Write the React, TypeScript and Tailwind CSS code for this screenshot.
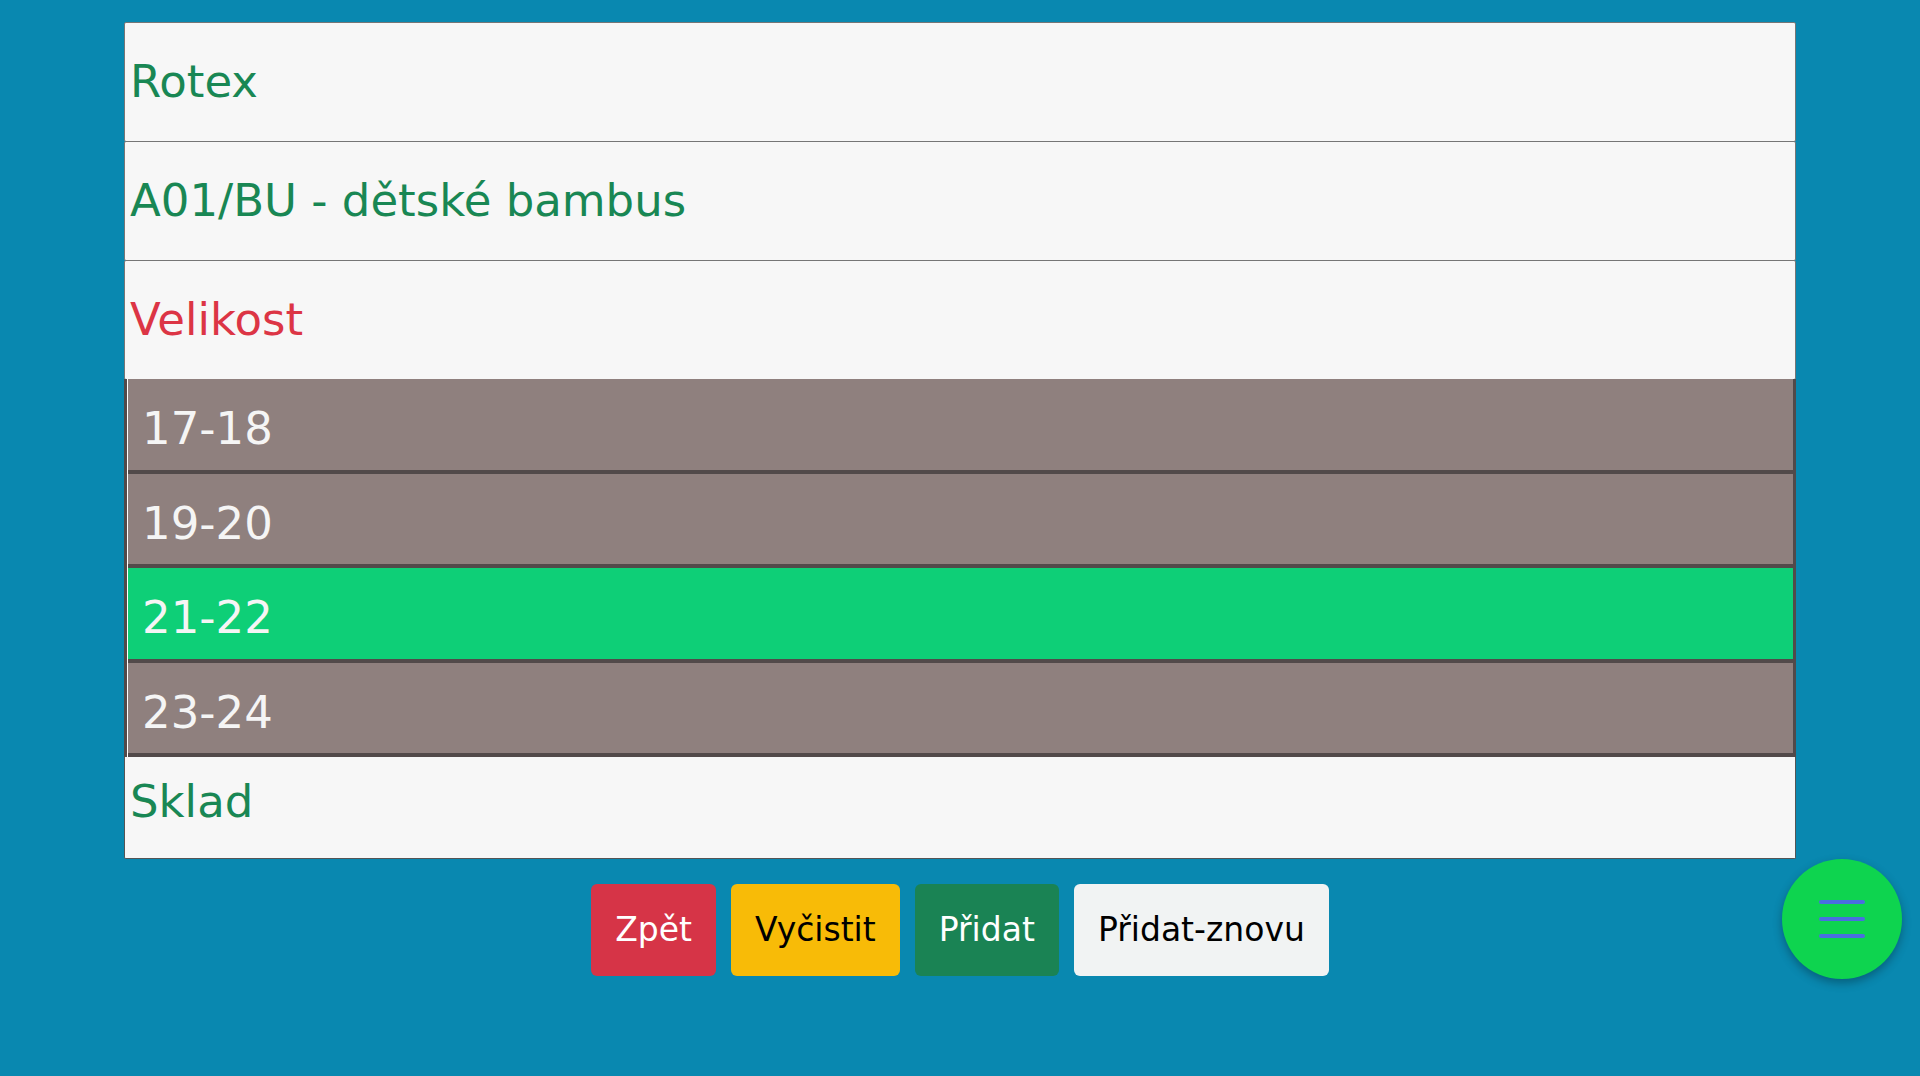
import React, { useState } from "react";

const sizes = ["17-18", "19-20", "21-22", "23-24"];

const Field: React.FC<{ text: string; color: string; first?: boolean }> = ({ text, color, first }) => (
  <div
    className={`h-[120px] flex items-center pl-[5px] bg-[#f7f7f7] border border-[#767676] rounded-[2px] text-[45px] ${color} ${first ? "" : "-mt-px"}`}
  >
    {text}
  </div>
);

const App: React.FC = () => {
  const [selected, setSelected] = useState("21-22");

  return (
    <div
      className="min-h-screen w-full bg-[#0988b0] pt-[22px]"
      style={{ fontFamily: '"DejaVu Sans", "Liberation Sans", sans-serif' }}
    >
      <div className="w-[1672px] mx-auto flex flex-col">
        <Field text="Rotex" color="text-[#198754]" first />
        <Field text="A01/BU - dětské bambus" color="text-[#198754]" />
        <Field text="Velikost" color="text-[#dc3545]" />

        {/* seznam velikostí */}
        <div className="-mt-px flex border-l-[3px] border-r-[3px] border-[#524a4a]">
          <div className="flex-1 flex flex-col border-l border-white">
            {sizes.map((s) => (
              <div
                key={s}
                onClick={() => setSelected(s)}
                className={`h-[94.5px] flex items-center pl-[14px] pt-[9px] border-b-4 border-[#524a4a] text-[45px] text-[#f5f5f5] cursor-pointer ${
                  selected === s ? "bg-[#0ecf77]" : "bg-[#8f807e]"
                }`}
              >
                {s}
              </div>
            ))}
          </div>
        </div>

        <div className="h-[102px] flex items-center pl-[5px] pb-[11px] bg-[#f7f7f7] border-x border-b border-[#555] rounded-b-[2px] text-[45px] text-[#198754]">
          Sklad
        </div>

        <div className="mt-[25px] flex justify-center gap-[15px] text-[33px]">
          <button className="h-[92px] px-[24px] rounded-md bg-[#d63447] text-white">Zpět</button>
          <button className="h-[92px] px-[24px] rounded-md bg-[#f8bb07] text-black">Vyčistit</button>
          <button className="h-[92px] px-[24px] rounded-md bg-[#1a8354] text-white">Přidat</button>
          <button className="h-[92px] px-[24px] rounded-md bg-[#f1f3f3] text-black">Přidat-znovu</button>
        </div>
      </div>

      {/* plovoucí menu */}
      <button className="fixed left-[1782px] top-[859px] w-[120px] h-[120px] rounded-full bg-[#0ed44f] shadow-[0_4px_10px_rgba(0,0,0,0.3)] flex flex-col items-center justify-center gap-[13px]">
        <span className="block w-[46px] h-[4px] rounded-full bg-[#4a6ee0]" />
        <span className="block w-[46px] h-[4px] rounded-full bg-[#4a6ee0]" />
        <span className="block w-[46px] h-[4px] rounded-full bg-[#4a6ee0]" />
      </button>
    </div>
  );
};

export default App;
